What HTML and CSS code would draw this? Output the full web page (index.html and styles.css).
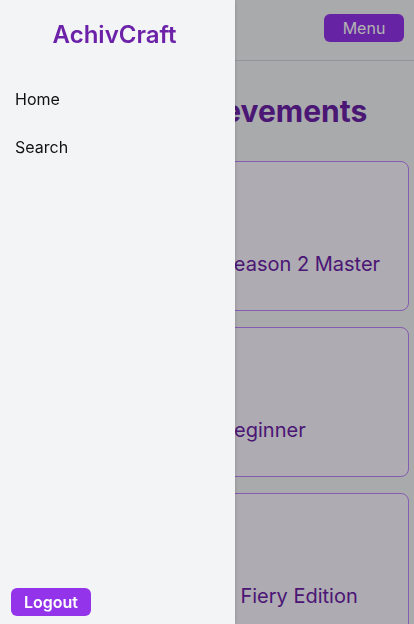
FILE: index.html
```html
<!DOCTYPE html>
<html lang="en">
<head>
<meta charset="utf-8">
<title>AchivCraft</title>
<link rel="stylesheet" href="styles.css">
</head>
<body>
<div class="page">
  <header class="topbar">
    <button class="menu-btn" type="button">Menu</button>
  </header>
  <main class="content">
    <h1 class="page-title">Achievements</h1>
    <ul class="cards">
      <li class="card"><div class="thumb"></div><h2 class="card-title">Season 2 Master</h2></li>
      <li class="card"><div class="thumb"></div><h2 class="card-title">Beginner</h2></li>
      <li class="card"><div class="thumb"></div><h2 class="card-title">A Fiery Edition</h2></li>
    </ul>
  </main>
</div>
<div class="overlay"></div>
<aside class="sidebar">
  <div class="logo">AchivCraft</div>
  <nav class="nav">
    <a class="nav-link" href="#">Home</a>
    <a class="nav-link" href="#">Search</a>
  </nav>
  <button class="logout-btn" type="button">Logout</button>
</aside>
</body>
</html>
```
FILE: styles.css
```css
* { box-sizing: border-box; }
html, body { margin: 0; padding: 0; }
body {
  font-family: Inter, "Noto Sans", sans-serif;
  background: #f3f4f6;
  color: #111827;
  height: 624px;
  overflow: hidden;
}
.page { min-height: 624px; }
.topbar {
  height: 61px;
  border-bottom: 1px solid #d1d5db;
  display: flex;
  justify-content: flex-end;
  align-items: flex-start;
  padding: 14px 10px 0 0;
}
.menu-btn {
  font-family: inherit;
  font-size: 16px;
  line-height: 20px;
  height: 28px;
  width: 80px;
  padding: 0;
  color: #ffffff;
  background: #9333ea;
  border: none;
  border-radius: 6px;
}
.content { padding: 32px 5px 0 5px; }
.page-title {
  margin: 0 0 32px 152px;
  font-size: 30px;
  line-height: 36px;
  font-weight: 700;
  color: #6b21a8;
}
.cards {
  list-style: none;
  margin: 0;
  padding: 0;
  display: flex;
  flex-direction: column;
  gap: 16px;
}
.card {
  height: 150px;
  background: #faf5ff;
  border: 1px solid #c084fc;
  border-radius: 8px;
  display: grid;
  grid-template-columns: 200px 1fr;
  align-items: end;
  padding: 15px 15px 32px 15px;
}
.card-title {
  margin: 0;
  font-size: 20px;
  line-height: 28px;
  font-weight: 400;
  color: #6b21a8;
}
.overlay {
  position: fixed;
  inset: 0;
  background: rgba(0, 0, 0, 0.3);
}
.sidebar {
  position: fixed;
  top: 0;
  left: 0;
  bottom: 0;
  width: 235px;
  background: #f3f4f6;
  display: flex;
  flex-direction: column;
  padding: 19px 0 8px 0;
  box-shadow: 1px 0 3px rgba(0, 0, 0, 0.12);
}
.logo {
  text-align: center;
  font-size: 24px;
  line-height: 32px;
  font-weight: 600;
  color: #6b21a8;
  margin-bottom: 24px;
  padding-right: 6px;
}
.nav { display: flex; flex-direction: column; }
.nav-link {
  display: block;
  padding: 12px 15px;
  font-size: 16px;
  line-height: 24px;
  color: #111111;
  text-decoration: none;
}
.logout-btn {
  margin-top: auto;
  margin-left: 11px;
  align-self: flex-start;
  width: 80px;
  height: 28px;
  padding: 0;
  font-family: inherit;
  font-size: 16px;
  line-height: 24px;
  font-weight: 600;
  color: #ffffff;
  background: #9333ea;
  border: none;
  border-radius: 6px;
}
```
